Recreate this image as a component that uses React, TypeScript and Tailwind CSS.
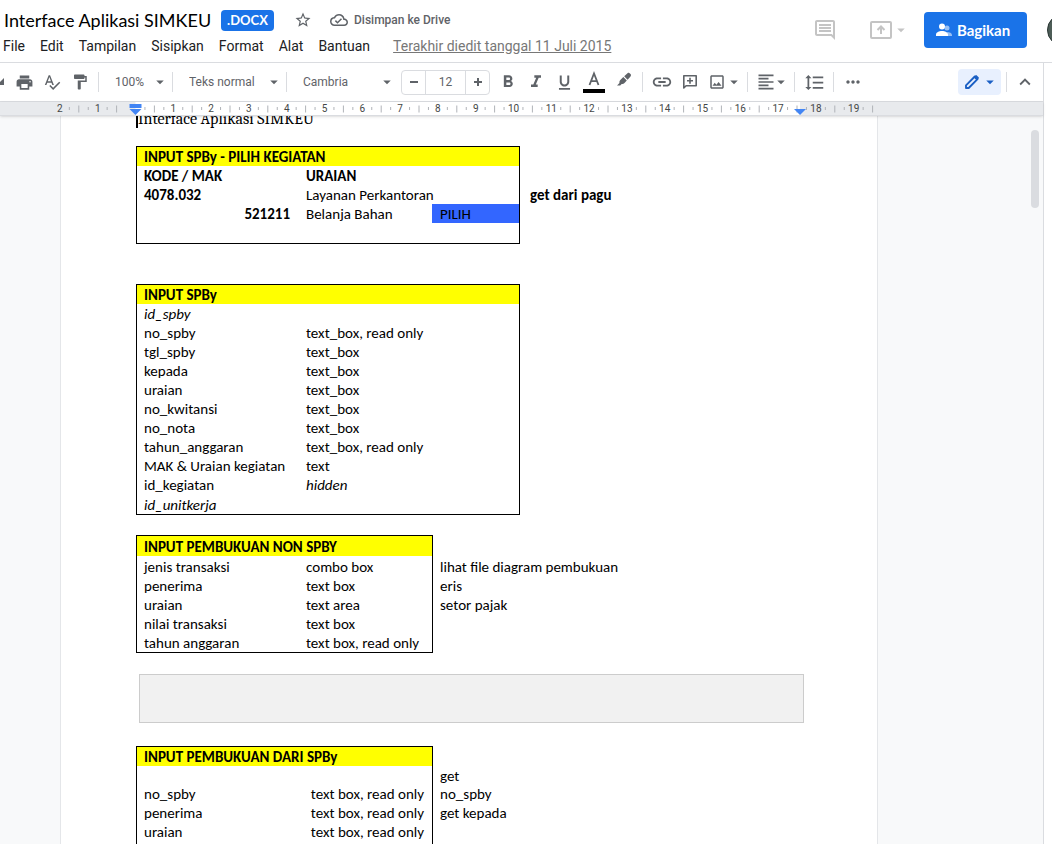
import type { ReactNode } from "react";
import {
  MdArrowDropDown,
  MdFormatAlignLeft,
  MdFormatBold,
  MdFormatItalic,
  MdFormatLineSpacing,
  MdFormatPaint,
  MdFormatUnderlined,
  MdKeyboardArrowUp,
  MdLink,
  MdMoreHoriz,
  MdOutlineCloudDone,
  MdOutlineImage,
  MdOutlineInsertComment,
  MdPrint,
  MdSpellcheck,
  MdStarBorder,
} from "react-icons/md";

const menus = ["File", "Edit", "Tampilan", "Sisipkan", "Format", "Alat", "Bantuan"];

function Header() {
  return (
    <header className="flex h-[63px] shrink-0 items-center overflow-hidden border-b border-[#dadce0] bg-white">
      <div className="flex min-w-0 flex-1 flex-col">
        <div className="flex h-[30px] items-center">
          <input
            aria-label="Nama dokumen"
            defaultValue="Interface Aplikasi SIMKEU"
            className="w-[221px] bg-transparent pl-1 font-['Lato',sans-serif] text-lg text-black outline-none"
          />
          <span className="flex h-[21px] w-[53px] items-center justify-center rounded bg-[#1a73e8] pt-0.5 font-['Lato',sans-serif] text-[13px] font-bold text-white">
            .DOCX
          </span>
          <button type="button" aria-label="Bintangi" className="ml-5 text-[#5f6368]">
            <MdStarBorder size={18} />
          </button>
          <button
            type="button"
            className="ml-[18px] flex items-center gap-1.5 text-xs font-medium whitespace-nowrap text-[#5f6368]"
          >
            <MdOutlineCloudDone size={18} />
            Disimpan ke Drive
          </button>
        </div>
        <nav className="flex h-[22px] items-center gap-[15px] pl-[3px] text-sm whitespace-nowrap text-[#202124]">
          {menus.map((m) => (
            <button key={m} type="button">
              {m}
            </button>
          ))}
          <a href="#riwayat" className="ml-2 text-[#777777] underline">
            Terakhir diedit tanggal 11 Juli 2015
          </a>
        </nav>
      </div>
      <div className="mb-0.5 flex shrink-0 items-center">
        <button type="button" aria-label="Komentar" className="text-[#c4c4c4]">
          <MdOutlineInsertComment size={24} />
        </button>
        <button
          type="button"
          aria-label="Presentasikan"
          className="ml-[27px] flex h-9 w-[52px] items-center justify-center rounded-full text-[#c4c4c4]"
        >
          <svg width="22" height="18" viewBox="0 0 22 18" fill="none" stroke="currentColor" strokeWidth="2">
            <rect x="1" y="1" width="20" height="16" rx="1" />
            <path d="M11 13V6M7.5 9L11 5.5L14.5 9" />
          </svg>
          <MdArrowDropDown size={18} />
        </button>
        <button
          type="button"
          className="ml-2 flex h-9 w-[103px] items-center gap-[5px] rounded bg-[#1a73e8] pl-3 font-['Lato',sans-serif] text-[15px] font-bold text-white"
        >
          <svg width="16" height="14" viewBox="0 0 16 14" fill="white">
            <circle cx="11" cy="5" r="2.5" opacity=".55" />
            <path d="M11 9c2.500 0 5 1 5 3v1h-4z" opacity=".55" />
            <circle cx="6" cy="3.500" r="3" />
            <path d="M6 8c3 0 6 1.300 6 3.500V13H0v-1.500C0 9.300 3 8 6 8z" />
          </svg>
          Bagikan
        </button>
        <button
          type="button"
          aria-label="Akun Google"
          className="-mr-[27px] ml-5 size-8 rounded-full border border-[#2b3634] bg-[#4d5d57]"
        />
      </div>
    </header>
  );
}

function Sep() {
  return <span className="h-5 w-px shrink-0 bg-[#dadce0]" />;
}

function Tool({ label, children }: { label: string; children: ReactNode }) {
  return (
    <button type="button" aria-label={label} className="flex h-7 w-7 shrink-0 items-center justify-center">
      {children}
    </button>
  );
}

function Picker({ label, value, width }: { label: string; value: string; width: string }) {
  return (
    <div className={`grid shrink-0 items-center ${width}`}>
      <select
        aria-label={label}
        defaultValue={value}
        className="col-start-1 row-start-1 h-6 w-full appearance-none bg-transparent pl-4 text-xs outline-none"
      >
        <option>{value}</option>
      </select>
      <MdArrowDropDown size={18} className="pointer-events-none col-start-1 row-start-1 mr-[3px] justify-self-end" />
    </div>
  );
}

function Toolbar() {
  return (
    <div
      role="toolbar"
      className="flex h-[39px] shrink-0 items-center border-b border-[#dadce0] bg-white text-[#5f6368]"
    >
      <svg width="4" height="8" viewBox="0 0 4 8" className="mr-1.5 shrink-0">
        <path d="M4 0v7H0V4z" fill="currentColor" />
      </svg>
      <Tool label="Cetak">
        <MdPrint size={19} />
      </Tool>
      <Tool label="Pemeriksaan ejaan">
        <MdSpellcheck size={18} />
      </Tool>
      <Tool label="Salin format">
        <MdFormatPaint size={18} />
      </Tool>
      <span className="w-1 shrink-0" />
      <Sep />
      <Picker label="Zoom" value="100%" width="w-[73px]" />
      <Sep />
      <Picker label="Gaya" value="Teks normal" width="w-[113px]" />
      <Sep />
      <Picker label="Font" value="Cambria" width="w-[112px]" />
      <div className="mr-1 ml-0.5 flex h-[25px] w-[89px] shrink-0 rounded-sm border border-[#dadce0]">
        <button type="button" aria-label="Kecilkan font" className="flex flex-1 items-center justify-center">
          <svg width="10" height="10" viewBox="0 0 10 10" stroke="currentColor" strokeWidth="2">
            <path d="M1 5h8" />
          </svg>
        </button>
        <input
          aria-label="Ukuran font"
          defaultValue="12"
          className="w-[41px] border-x border-[#dadce0] bg-transparent text-center text-xs outline-none"
        />
        <button type="button" aria-label="Besarkan font" className="flex flex-1 items-center justify-center">
          <svg width="10" height="10" viewBox="0 0 10 10" stroke="currentColor" strokeWidth="2">
            <path d="M1 5h8M5 1v8" />
          </svg>
        </button>
      </div>
      <Tool label="Tebal">
        <MdFormatBold size={20} />
      </Tool>
      <Tool label="Miring">
        <MdFormatItalic size={20} />
      </Tool>
      <Tool label="Garis bawah">
        <MdFormatUnderlined size={19} />
      </Tool>
      <span className="w-0.5 shrink-0" />
      <Tool label="Warna teks">
        <svg width="22" height="22" viewBox="0 0 22 22">
          <path d="M6.500 14L11 2.500L15.500 14M8 10.200h6" fill="none" stroke="currentColor" strokeWidth="1.800" />
          <path d="M0 18h22v4H0z" fill="black" />
        </svg>
      </Tool>
      <span className="w-0.5 shrink-0" />
      <Tool label="Warna sorotan">
        <svg width="16" height="16" viewBox="0 0 16 16" fill="currentColor" className="mb-1">
          <path d="M8.200 4.200L11.500 1.300c.8-.7 1.700-.6 2.400.1l.6.7c.6.7.7 1.600 0 2.300L11.600 7.700z" />
          <path d="M7.300 5.100l3.500 3.500-2.300 2.500c-.8.8-1.800 1-2.800.8L4.200 13.600H1l2.500-2.700c-.3-1 0-2.200.8-3z" />
        </svg>
      </Tool>
      <span className="w-1 shrink-0" />
      <Sep />
      <span className="w-[5px] shrink-0" />
      <Tool label="Sisipkan link">
        <MdLink size={22} />
      </Tool>
      <Tool label="Tambahkan komentar">
        <svg width="16" height="16" viewBox="0 0 16 16" fill="none" stroke="currentColor" strokeWidth="1.600">
          <path d="M1.800 14V1.800h12.400v9.900H4.100z" strokeLinejoin="round" />
          <path d="M8 3.800v6M5 6.800h6" />
        </svg>
      </Tool>
      <button type="button" aria-label="Sisipkan gambar" className="ml-1 flex shrink-0 items-center">
        <MdOutlineImage size={18} />
        <MdArrowDropDown size={18} className="-ml-px" />
      </button>
      <span className="w-1 shrink-0" />
      <Sep />
      <button type="button" aria-label="Ratakan" className="ml-2 flex shrink-0 items-center">
        <MdFormatAlignLeft size={20} />
        <MdArrowDropDown size={18} className="-ml-1" />
      </button>
      <span className="w-1 shrink-0" />
      <Sep />
      <span className="w-[5px] shrink-0" />
      <Tool label="Spasi baris">
        <MdFormatLineSpacing size={21} />
      </Tool>
      <span className="w-[5px] shrink-0" />
      <Sep />
      <span className="w-[5px] shrink-0" />
      <Tool label="Lainnya">
        <MdMoreHoriz size={20} />
      </Tool>
      <button
        type="button"
        aria-label="Mode pengeditan"
        className="mr-[5px] ml-auto flex h-[26px] w-[43px] shrink-0 items-center justify-between rounded bg-[#e8f0fe] pr-0.5 pl-1.5 text-[#1a5fc4]"
      >
        <svg width="16" height="16" viewBox="0 0 16 16" fill="none" stroke="currentColor">
          <path d="M2 14v-2.700L10.800 2.500l2.700 2.700L4.700 14z" strokeWidth="1.900" strokeLinejoin="round" />
          <path d="M11 3.200l1.100-1.100 1.800 1.800-1.100 1.100z" strokeWidth="2" strokeLinejoin="round" />
        </svg>
        <MdArrowDropDown size={18} />
      </button>
      <Sep />
      <button type="button" aria-label="Sembunyikan menu" className="flex w-9 shrink-0 items-center justify-center">
        <MdKeyboardArrowUp size={22} />
      </button>
    </div>
  );
}

// Ruler scale: one centimetre in screen pixels and the position of zero.
const CM = 37.8;
const ZERO = 135.5;

function Ruler() {
  const labels = Array.from({ length: 22 }, (_, i) => i - 2);
  return (
    <div className="z-10 h-[14px] shrink-0 overflow-hidden border-b border-[#dadce0] bg-[#e8eaed] shadow-sm">
      <svg width="880" height="14" className="block">
        <rect x={ZERO} y="0" width={CM * 17.58} height="14" fill="white" />
        {labels.map((n) => {
          const x = ZERO + n * CM;
          return (
            <g key={n}>
              {n !== 0 && (
                <text
                  x={x}
                  y="10"
                  textAnchor="middle"
                  className="fill-[#444746] font-['Roboto',sans-serif] text-[10px]"
                >
                  {Math.abs(n)}
                </text>
              )}
              {n !== -2 && n !== 0 && <path d={`M${x - CM / 4} 5v3`} stroke="#b0b3b8" />}
              <path d={`M${x + CM / 4} 5v3`} stroke="#b0b3b8" />
              <path d={`M${x + CM / 2} 3.500v7`} stroke="#b0b3b8" />
            </g>
          );
        })}
        <path d={`M${ZERO - 6} 2h12v4h-12z`} fill="#4285f4" />
        <path d={`M${ZERO - 6} 7h12l-6 6z`} fill="#4285f4" />
        <path d={`M${ZERO + CM * 17.58 - 6} 7h12l-6 6z`} fill="#4285f4" />
      </svg>
    </div>
  );
}

type Row = {
  name?: ReactNode;
  value?: ReactNode;
  note?: ReactNode;
  nameClass?: string;
  valueClass?: string;
  height?: string;
};

const base = "overflow-visible p-0 whitespace-nowrap align-bottom";

/* Three-column box with free notes at its right. */
function WideTable({
  title,
  rows,
  className,
}: {
  title: string;
  rows: (Row & { action?: ReactNode })[];
  className: string;
}) {
  return (
    <table className={`w-full table-fixed border-separate border-spacing-0 ${className}`}>
      <colgroup>
        <col className="w-[162px]" />
        <col className="w-[134px]" />
        <col className="w-[88px]" />
        <col />
      </colgroup>
      <thead>
        <tr className="h-5">
          <th colSpan={3} className={`${base} border border-b-0 border-black bg-[#ffff00] px-[7px] text-left`}>
            {title}
          </th>
          <td />
        </tr>
      </thead>
      <tbody>
        {rows.map((r, i) => {
          const end = i === rows.length - 1 ? "border-b" : "";
          return (
            <tr key={i} className={r.height ?? "h-[19px]"}>
              <td className={`${base} border-l border-black pr-2 pl-[7px] ${end} ${r.nameClass ?? ""}`}>{r.name}</td>
              <td className={`${base} border-black px-2 ${end} ${r.valueClass ?? ""}`}>{r.value}</td>
              <td className={`${base} border-r border-black px-2 ${end} ${r.action ? "bg-[#3366ff]" : ""}`}>
                {r.action}
              </td>
              <td className={`${base} pl-[10px] font-bold`}>{r.note}</td>
            </tr>
          );
        })}
      </tbody>
    </table>
  );
}

/* Two-column box with free notes at its right; an open box runs on below the fold. */
function NarrowTable({
  title,
  rows,
  className,
  head,
  open,
}: {
  title: string;
  rows: Row[];
  className: string;
  head: string;
  open?: boolean;
}) {
  return (
    <table className={`w-full table-fixed border-separate border-spacing-0 ${className}`}>
      <colgroup>
        <col className="w-[162px]" />
        <col className="w-[135px]" />
        <col />
      </colgroup>
      <thead>
        <tr className={head}>
          <th colSpan={2} className={`${base} border border-b-0 border-black bg-[#ffff00] px-[7px] text-left`}>
            {title}
          </th>
          <td />
        </tr>
      </thead>
      <tbody>
        {rows.map((r, i) => {
          const end = i === rows.length - 1 && !open ? "border-b" : "";
          return (
            <tr key={i} className={r.height ?? "h-[19px]"}>
              <td className={`${base} border-l border-black px-[7px] ${end}`}>{r.name}</td>
              <td className={`${base} border-r border-black px-2 ${end} ${r.valueClass ?? ""}`}>{r.value}</td>
              <td className={`${base} px-[7px]`}>{r.note}</td>
            </tr>
          );
        })}
      </tbody>
    </table>
  );
}

function Page() {
  return (
    <article className="ml-[60px] w-[818px] shrink-0 border-x border-[#e4e6e9] bg-white pr-[72px] pl-[75px] font-['Carlito','Lato',sans-serif] text-[15px] leading-[17px] text-black">
      <p className="-mt-1.5 flex h-[18px] items-center font-['Caladea','Liberation_Serif',serif] text-base">
        <span className="h-[18px] w-0.5 bg-black" />
        Interface Aplikasi SIMKEU
      </p>
      <WideTable
        className="mt-[18px]"
        title="INPUT SPBy - PILIH KEGIATAN"
        rows={[
          { name: "KODE / MAK", nameClass: "font-bold", value: "URAIAN", valueClass: "font-bold" },
          { name: "4078.032", nameClass: "font-bold", value: "Layanan Perkantoran", note: "get dari pagu" },
          { name: "521211", nameClass: "font-bold text-right", value: "Belanja Bahan", action: "PILIH" },
          { height: "h-[21px]" },
        ]}
      />
      <WideTable
        className="mt-10"
        title="INPUT SPBy"
        rows={[
          { name: "id_spby", nameClass: "italic" },
          { name: "no_spby", value: "text_box, read only" },
          { name: "tgl_spby", value: "text_box" },
          { name: "kepada", value: "text_box" },
          { name: "uraian", value: "text_box" },
          { name: "no_kwitansi", value: "text_box" },
          { name: "no_nota", value: "text_box" },
          { name: "tahun_anggaran", value: "text_box, read only" },
          { name: "MAK & Uraian kegiatan", value: "text" },
          { name: "id_kegiatan", value: "hidden", valueClass: "italic" },
          { name: "id_unitkerja", nameClass: "italic", height: "h-[21px]" },
        ]}
      />
      <NarrowTable
        className="mt-5"
        head="h-[21px]"
        title="INPUT PEMBUKUAN NON SPBY"
        rows={[
          { name: "jenis transaksi", value: "combo box", note: "lihat file diagram pembukuan", height: "h-5" },
          { name: "penerima", value: "text box", note: "eris" },
          { name: "uraian", value: "text area", note: "setor pajak" },
          { name: "nilai transaksi", value: "text box" },
          { name: "tahun anggaran", value: "text box, read only", height: "h-5" },
        ]}
      />
      <div className="mt-[21px] mr-px ml-[3px] h-[49px] border border-[#cccccc] bg-[#f1f1f1]" />
      <NarrowTable
        className="mt-[23px]"
        head="h-5"
        open
        title="INPUT PEMBUKUAN DARI SPBy"
        rows={[
          {
            name: "no_spby",
            value: "text box, read only",
            valueClass: "text-right",
            height: "h-[37px]",
            note: (
              <div className="leading-[18px]">
                get
                <br />
                no_spby
              </div>
            ),
          },
          { name: "penerima", value: "text box, read only", valueClass: "text-right", note: "get kepada" },
          { name: "uraian", value: "text box, read only", valueClass: "text-right" },
          { height: "h-20" },
        ]}
      />
    </article>
  );
}

export default function App() {
  return (
    <div className="flex h-screen flex-col overflow-hidden bg-white font-['Roboto',sans-serif]">
      <Header />
      <div className="flex min-h-0 flex-1">
        <div className="flex min-w-0 flex-1 flex-col">
          <Toolbar />
          <Ruler />
          <main className="flex min-h-0 flex-1 items-start justify-between overflow-hidden bg-[#f8f9fa]">
            <Page />
            <div className="mt-[14px] mr-1 h-[78px] w-2 shrink-0 rounded bg-[#dadce0]" />
          </main>
        </div>
        <aside className="w-[9px] shrink-0 border-l border-[#dadce0] bg-white" />
      </div>
    </div>
  );
}
